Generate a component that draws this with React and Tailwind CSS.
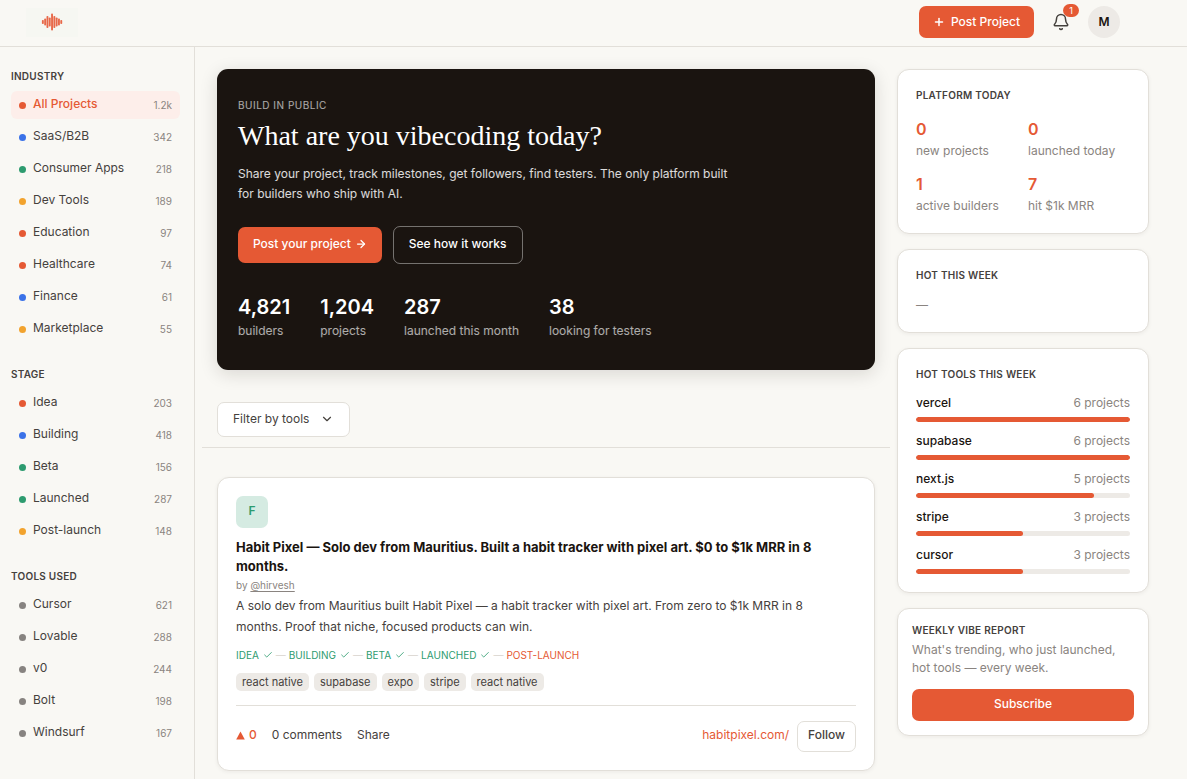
import React, { useState } from 'react';
import { ArrowRight, Bell, Check, ChevronDown, Plus } from 'lucide-react';

const industries = [
  { name: 'All Projects', count: '1.2k', dot: 'bg-[#e55934]' },
  { name: 'SaaS/B2B', count: '342', dot: 'bg-[#3b72e8]' },
  { name: 'Consumer Apps', count: '218', dot: 'bg-[#2d9b6f]' },
  { name: 'Dev Tools', count: '189', dot: 'bg-[#f2a32e]' },
  { name: 'Education', count: '97', dot: 'bg-[#e55934]' },
  { name: 'Healthcare', count: '74', dot: 'bg-[#e55934]' },
  { name: 'Finance', count: '61', dot: 'bg-[#3b72e8]' },
  { name: 'Marketplace', count: '55', dot: 'bg-[#f2a32e]' },
];

const stages = [
  { name: 'Idea', count: '203', dot: 'bg-[#e55934]' },
  { name: 'Building', count: '418', dot: 'bg-[#3b72e8]' },
  { name: 'Beta', count: '156', dot: 'bg-[#2d9b6f]' },
  { name: 'Launched', count: '287', dot: 'bg-[#2d9b6f]' },
  { name: 'Post-launch', count: '148', dot: 'bg-[#f2a32e]' },
];

const tools = [
  { name: 'Cursor', count: '621', dot: 'bg-[#878380]' },
  { name: 'Lovable', count: '288', dot: 'bg-[#878380]' },
  { name: 'v0', count: '244', dot: 'bg-[#878380]' },
  { name: 'Bolt', count: '198', dot: 'bg-[#878380]' },
  { name: 'Windsurf', count: '167', dot: 'bg-[#878380]' },
];

const heroStats = [
  { value: '4,821', label: 'builders' },
  { value: '1,204', label: 'projects' },
  { value: '287', label: 'launched this month' },
  { value: '38', label: 'looking for testers' },
];

const todayStats = [
  { value: '0', label: 'new projects' },
  { value: '0', label: 'launched today' },
  { value: '1', label: 'active builders' },
  { value: '7', label: 'hit $1k MRR' },
];

const hotTools = [
  { name: 'vercel', projects: 6 },
  { name: 'supabase', projects: 6 },
  { name: 'next.js', projects: 5 },
  { name: 'stripe', projects: 3 },
  { name: 'cursor', projects: 3 },
];

const doneStages = ['IDEA', 'BUILDING', 'BETA', 'LAUNCHED'];
const tags = ['react native', 'supabase', 'expo', 'stripe', 'react native'];

const Logo = () => {
  const bars = [4, 7, 12, 9, 17, 12, 9, 7, 4];
  return (
    <svg width="22" height="18" viewBox="0 0 22 18" aria-hidden="true">
      {bars.map((h, i) => (
        <rect key={i} x={0.9 + i * 2.3} y={9 - h / 2} width="1.9" height={h} rx="0.8" fill="#e8694a" />
      ))}
    </svg>
  );
};

const Header = () => (
  <header className="flex h-[47px] items-center justify-between border-b border-[#e2dfd9] pb-[2px] pl-[26px] pr-[67px]">
    <a href="#" aria-label="Home" className="flex h-[29px] w-[52px] items-center justify-center bg-[#f6f7f2]">
      <Logo />
    </a>
    <div className="flex items-center">
      <button type="button" className="flex h-8 items-center gap-[6px] rounded-[7px] bg-[#e55934] px-[14px] pb-[1px] text-xs font-medium text-white">
        <Plus size={12} strokeWidth={3} />
        Post Project
      </button>
      <button type="button" aria-label="Notifications" className="relative ml-[18px] text-[#45413d]">
        <Bell size={18} strokeWidth={2} />
        <span className="absolute -right-[9px] -top-[9px] flex h-[13px] w-4 items-center justify-center rounded-full bg-[#e55934] text-[9px] text-white">1</span>
      </button>
      <button type="button" className="ml-[18px] h-8 w-8 rounded-full bg-[#edeae6] pb-[1px] text-xs font-semibold text-[#1a1410]">M</button>
    </div>
  </header>
);

const FilterList = ({ title, items, active }) => (
  <section className="mb-6">
    <h2 className="mb-2 text-[10px] font-semibold leading-[14px] tracking-wide">{title}</h2>
    <ul className="flex flex-col gap-1">
      {items.map((item) => (
        <li key={item.name}>
          <button
            type="button"
            className={`flex h-7 w-full items-center gap-[7px] rounded-md px-2 text-left ${
              item.name === active ? 'bg-[#fdeeea] font-medium text-[#e55934]' : ''
            }`}
          >
            <span className={`h-[7px] w-[7px] rounded-full ${item.dot}`}></span>
            <span className="flex-1 pb-[2px] text-xs">{item.name}</span>
            <span className="text-[10px] font-normal text-[#8a8480]">{item.count}</span>
          </button>
        </li>
      ))}
    </ul>
  </section>
);

const Hero = () => (
  <section className="rounded-[11px] bg-[#1a1410] px-[21px] pb-[30px] pt-7 text-white shadow-[0_4px_18px_rgba(26,20,16,0.14)]">
    <p className="text-[10px] leading-4 tracking-wider text-white/65">BUILD IN PUBLIC</p>
    <h1 className="mt-[7px] font-['Liberation_Serif',serif] text-[28px] leading-8">What are you vibecoding today?</h1>
    <p className="mt-3 max-w-[504px] text-xs leading-5 text-white/85">
      Share your project, track milestones, get followers, find testers. The only platform built for builders who ship with AI.
    </p>
    <div className="mt-[22px] flex items-center gap-[11px]">
      <button type="button" className="flex h-9 items-center gap-1 rounded-[7px] bg-[#e55934] px-[15px] pb-[2px] text-xs font-medium">
        Post your project
        <ArrowRight size={12} strokeWidth={2.5} />
      </button>
      <button type="button" className="h-[38px] rounded-[7px] border border-white/40 px-[15px] pb-[2px] text-xs font-medium">See how it works</button>
    </div>
    <dl className="mt-[30px] flex gap-[30px]">
      {heroStats.map((stat) => (
        <div key={stat.label} className="flex flex-col-reverse gap-[2px]">
          <dt className="text-xs leading-[18px] text-white/65">{stat.label}</dt>
          <dd className="text-xl font-semibold leading-[26px]">{stat.value}</dd>
        </div>
      ))}
    </dl>
  </section>
);

const ProjectCard = () => {
  const [votes, setVotes] = useState(0);

  return (
    <article className="mt-[29px] rounded-xl border border-[#e2dfd9] bg-white p-[18px] shadow-[0_1px_4px_rgba(26,20,16,0.06)]">
      <div className="flex h-8 w-8 items-center justify-center rounded-[7px] bg-[#d5ebe2] pb-[2px] text-xs font-semibold text-[#2d9b6f]">F</div>
      <h2 className="mt-[10px] text-[13px] font-bold leading-[19px] text-[#1a1410]">
        Habit Pixel — Solo dev from Mauritius. Built a habit tracker with pixel art. $0 to $1k MRR in 8 months.
      </h2>
      <p className="text-[10px] leading-[18px] text-[#8a8480]">
        by <a href="#" className="underline underline-offset-2">@hirvesh</a>
      </p>
      <p className="mt-[1px] max-w-[600px] text-xs leading-[21px]">
        A solo dev from Mauritius built Habit Pixel — a habit tracker with pixel art. From zero to $1k MRR in 8 months. Proof that niche, focused products can win.
      </p>
      <div className="mt-[10px] flex items-center gap-[3px] text-[10px] leading-4 text-[#2d9b6f]">
        {doneStages.map((stage) => (
          <React.Fragment key={stage}>
            <span className="flex items-center gap-1">
              {stage}
              <Check size={10} />
            </span>
            <span className="text-[#d8d4ce]">—</span>
          </React.Fragment>
        ))}
        <span className="text-[#e55934]">POST-LAUNCH</span>
      </div>
      <ul className="mt-[10px] flex gap-[5px]">
        {tags.map((tag, i) => (
          <li key={i} className="rounded-[5px] bg-[#edeae6] px-[6px] text-[11px] leading-[18px]">{tag}</li>
        ))}
      </ul>
      <div className="mt-[14px] flex items-center gap-[15px] border-t border-[#e2dfd9] pt-[15px] text-xs">
        <button type="button" onClick={() => setVotes(votes + 1)} className="flex items-center gap-1 pb-[3px] font-medium text-[#e55934]">
          <svg width="9" height="9" viewBox="0 0 9 9" aria-hidden="true">
            <path d="M4.5 0.5 8.8 8.5H0.2Z" fill="currentColor" />
          </svg>
          {votes}
        </button>
        <button type="button" className="pb-[3px]">0 comments</button>
        <button type="button" className="pb-[3px]">Share</button>
        <div className="ml-auto flex items-center gap-2">
          <a href="#" className="pb-[3px] text-[#e55934]">habitpixel.com/</a>
          <button type="button" className="h-[31px] rounded-[7px] border border-[#e2dfd9] px-[10px] pb-[3px] font-medium">Follow</button>
        </div>
      </div>
    </article>
  );
};

const Card = ({ title, className = 'p-[18px]', children }) => (
  <section className={`rounded-xl border border-[#e2dfd9] bg-white shadow-[0_1px_4px_rgba(26,20,16,0.06)] ${className}`}>
    <h2 className="text-[10px] font-semibold leading-[14px] tracking-wide">{title}</h2>
    {children}
  </section>
);

const RightRail = () => (
  <aside className="flex w-[252px] shrink-0 flex-col gap-[15px]">
    <Card title="PLATFORM TODAY">
      <dl className="mt-4 grid grid-cols-2 gap-x-[10px] gap-y-[13px]">
        {todayStats.map((stat) => (
          <div key={stat.label} className="flex flex-col-reverse gap-[2px]">
            <dt className="text-xs leading-[18px] text-[#8a8480]">{stat.label}</dt>
            <dd className="text-base font-semibold leading-[22px] text-[#e55934]">{stat.value}</dd>
          </div>
        ))}
      </dl>
    </Card>
    <Card title="HOT THIS WEEK">
      <p className="mt-[14px] text-xs leading-[18px] text-[#8a8480]">—</p>
    </Card>
    <Card title="HOT TOOLS THIS WEEK">
      <ul className="mt-[13px] flex flex-col gap-[10px]">
        {hotTools.map((tool) => (
          <li key={tool.name}>
            <div className="flex justify-between text-xs leading-[18px]">
              <span className="font-medium text-[#1a1410]">{tool.name}</span>
              <span className="text-[#8a8480]">{tool.projects} projects</span>
            </div>
            <div className="mt-[5px] h-[5px] overflow-hidden rounded-full bg-[#edeae6]">
              <div className="h-full rounded-full bg-[#e55934]" style={{ width: `${(tool.projects / 6) * 100}%` }}></div>
            </div>
          </li>
        ))}
      </ul>
    </Card>
    <Card title="WEEKLY VIBE REPORT" className="p-[14px]">
      <p className="mt-[4px] text-xs leading-[18px] text-[#8a8480]">What's trending, who just launched, hot tools — every week.</p>
      <button type="button" className="mt-3 h-8 w-full rounded-[7px] bg-[#e55934] pb-[2px] text-xs font-medium text-white">Subscribe</button>
    </Card>
  </aside>
);

const App = () => (
  <div className="flex h-screen flex-col overflow-hidden bg-[#f9f8f4] font-['Inter',sans-serif] text-[#45413d]">
    <Header />
    <div className="flex min-h-0 flex-1">
      <nav aria-label="Filters" className="w-[195px] shrink-0 border-r border-[#e2dfd9] pl-[11px] pr-[14px] pt-[22px]">
        <FilterList title="INDUSTRY" items={industries} active="All Projects" />
        <FilterList title="STAGE" items={stages} />
        <FilterList title="TOOLS USED" items={tools} />
      </nav>
      <div className="flex flex-1 gap-[22px] pl-[22px] pr-[38px] pt-[22px]">
        <main className="min-w-0 flex-1">
          <Hero />
          <div className="-mx-[15px] mt-8 border-b border-[#e2dfd9] px-[15px] pb-[10px]">
            <button type="button" className="flex h-[35px] items-center gap-[11px] rounded-[7px] border border-[#e2dfd9] bg-white px-[15px] pb-[2px] text-xs">
              Filter by tools
              <ChevronDown size={14} />
            </button>
          </div>
          <ProjectCard />
        </main>
        <RightRail />
      </div>
    </div>
  </div>
);

export default App;
